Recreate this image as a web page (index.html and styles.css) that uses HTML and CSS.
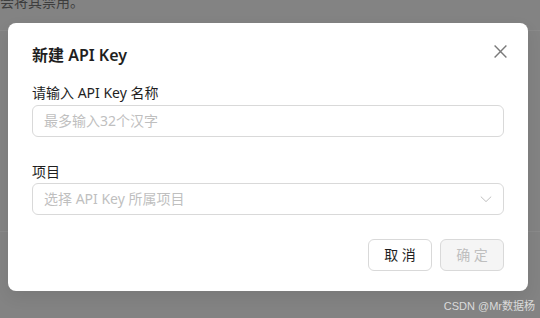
FILE: index.html
```html
<!DOCTYPE html>
<html lang="zh-CN">
<head>
<meta charset="utf-8">
<title>新建 API Key</title>
<link rel="stylesheet" href="styles.css">
</head>
<body>
<div class="page">
  <p class="page-text">会将其禁用。</p>
  <div class="page-row"></div>
  <div class="page-row tall"></div>
</div>

<div class="modal" role="dialog">
  <div class="modal-header">
    <h2 class="modal-title">新建 API Key</h2>
    <button class="modal-close" aria-label="Close">
      <svg viewBox="0 0 13 13" width="13" height="13"><path d="M0.6 0.6 L12.4 12.4 M12.4 0.6 L0.6 12.4" stroke="currentColor" stroke-width="1.4" fill="none"/></svg>
    </button>
  </div>
  <div class="modal-body">
    <div class="form-item">
      <label class="form-label">请输入 API Key 名称</label>
      <div class="input"><span class="placeholder">最多输入32个汉字</span></div>
    </div>
    <div class="form-item">
      <label class="form-label">项目</label>
      <div class="input select">
        <span class="placeholder">选择 API Key 所属项目</span>
        <svg class="arrow" viewBox="0 0 12 12" width="12" height="12"><path d="M0.8 3.6 L6 8.6 L11.2 3.6" stroke="currentColor" stroke-width="1" fill="none"/></svg>
      </div>
    </div>
  </div>
  <div class="modal-footer">
    <button class="btn">取 消</button>
    <button class="btn btn-disabled">确 定</button>
  </div>
</div>

<div class="watermark">CSDN @Mr数据杨</div>
</body>
</html>
```

FILE: styles.css
```css
* { box-sizing: border-box; }
html, body { margin: 0; padding: 0; }
body {
  width: 540px;
  height: 318px;
  overflow: hidden;
  background: #838383;
  font-family: "Noto Sans", "Noto Sans CJK SC", sans-serif;
  position: relative;
}
.page-text {
  margin: -9px 0 0 0;
  font-size: 14px;
  line-height: 22px;
  color: #3d3d3d;
}
.page-row {
  height: 18px;
  border-bottom: 1px solid #8a8a8a;
}
.page-row.tall { height: 201px; }

.modal {
  position: absolute;
  left: 8px;
  top: 23px;
  width: 520px;
  background: #fff;
  border-radius: 8px;
  padding: 20px 24px;
  box-shadow: 0 6px 16px rgba(0,0,0,0.08);
}
.modal-header {
  display: flex;
  align-items: center;
  justify-content: space-between;
  height: 24px;
  margin-bottom: 15px;
}
.modal-title {
  margin: 0;
  font-size: 16px;
  line-height: 24px;
  font-weight: 600;
  color: #1f1f1f;
}
.modal-close {
  border: 0;
  background: transparent;
  width: 22px;
  height: 22px;
  padding: 0;
  margin-right: -7px;
  margin-top: -8px;
  display: flex;
  align-items: center;
  justify-content: center;
  color: #7a7a7a;
}
.modal-body {
  display: flex;
  flex-direction: column;
  gap: 24px;
}
.form-item {
  display: flex;
  flex-direction: column;
  gap: 1px;
}
.form-item + .form-item { gap: 0; }
.form-label {
  font-size: 14px;
  line-height: 22px;
  color: #1f1f1f;
}
.input {
  height: 32px;
  border: 1px solid #d9d9d9;
  border-radius: 6px;
  padding: 0 11px;
  display: flex;
  align-items: center;
  justify-content: space-between;
}
.placeholder {
  font-size: 14px;
  line-height: 22px;
  color: #bfbfbf;
}
.arrow { color: #bfbfbf; }
.modal-footer {
  margin-top: 24px;
  display: flex;
  justify-content: flex-end;
  gap: 8px;
}
.btn {
  height: 32px;
  width: 64px;
  border: 1px solid #d9d9d9;
  border-radius: 6px;
  background: #fff;
  font-family: inherit;
  font-size: 14px;
  line-height: 22px;
  color: #1f1f1f;
  padding: 0;
  white-space: pre;
}
.btn-disabled {
  background: #f5f5f5;
  color: #bfbfbf;
}
.watermark {
  position: absolute;
  right: 5px;
  bottom: 5px;
  font-family: "Liberation Sans", "Noto Sans CJK SC", sans-serif;
  font-size: 11px;
  line-height: 14px;
  color: rgba(255,255,255,0.72);
}
```
